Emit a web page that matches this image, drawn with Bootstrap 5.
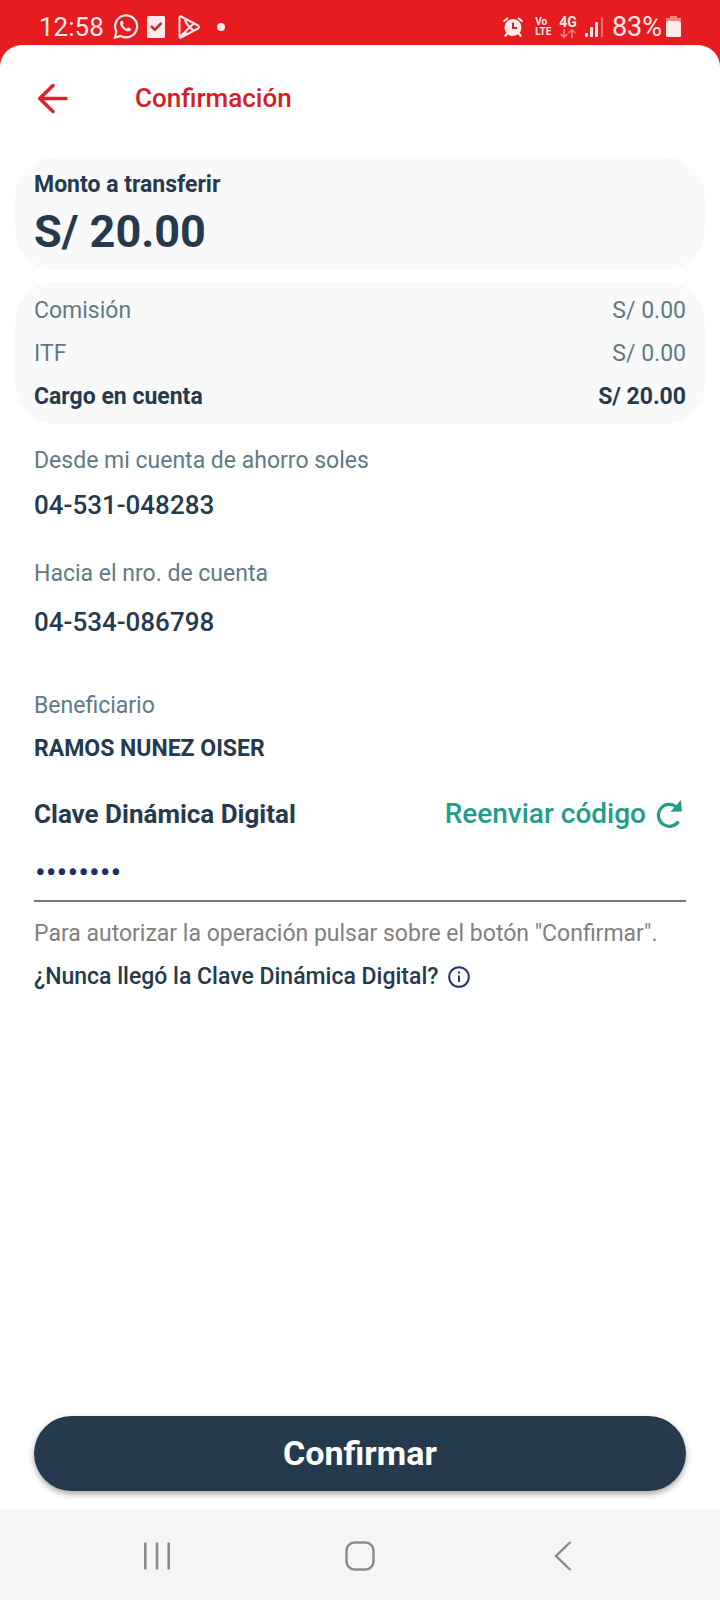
<!DOCTYPE html>
<html lang="es">
<head>
<meta charset="utf-8">
<meta name="viewport" content="width=device-width, initial-scale=1">
<title>Confirmación</title>
<link href="https://cdn.jsdelivr.net/npm/bootstrap@5.3.0/dist/css/bootstrap.min.css" rel="stylesheet">
<style>
  :root { --navy: #263a4e; --slate: #5f7a85; --brand-red: #e61c20; --teal: #1f9e8a; }
  body { font-family: Roboto, "Liberation Sans", sans-serif; font-size: 23px; line-height: 32px; color: var(--navy); background: var(--brand-red); }
  a, button { color: inherit; }
  .fw-mid { font-weight: 500; }
  .status-bar { height: 45px; padding: 8px 39px 0 39px; color: #ffeaea; font-size: 26px; }
  .status-bar .level { font-size: 27px; }
  .status-bar .tiny { font-size: 10px; line-height: 10px; font-weight: 700; }
  .status-bar .tiny span { display: block; }
  .status-bar .net { font-size: 14px; line-height: 14px; font-weight: 700; }
  .sheet { background: #fff; border-radius: 22px 22px 0 0; }
  .top-row { padding: 37px 36px 43px; gap: 65px; color: #d32027; }
  .top-row h1 { font-size: 26px; line-height: 32px; }
  .panel { background: #f9f9f9; border-radius: 40px; margin: 0 15px 12px; padding: 12px 19px 7px; }
  .panel-rows { padding: 7px 19px 6px; margin-bottom: 21px; }
  .panel-rows .charge { line-height: 43px; }
  .amount { font-size: 45px; line-height: 62px; }
  .side { padding-left: 34px; padding-right: 34px; }
  .muted { color: var(--slate); font-weight: 400; }
  .acct { font-size: 26px; line-height: 56px; margin-bottom: 25px; }
  .acct-to { line-height: 64px; margin-bottom: 36px; }
  .payee { line-height: 54px; margin-bottom: 18px; }
  .key-label { font-size: 26px; line-height: 40px; }
  .resend { font-size: 28px; line-height: 40px; color: var(--teal); gap: 9px; padding-right: 3px; }
  .key-input { height: 58px; margin-top: 10px; padding: 0 1px; border: 0; border-bottom: 2px solid #777; border-radius: 0; font-size: 32px; color: #1d2f5f; background: transparent; }
  .hint { color: #808080; margin: 16px 0 11px; }
  .help { gap: 10px; }
  .confirm { height: 75px; font-size: 34px; background: var(--navy); color: #fff; box-shadow: 0 3px 6px rgba(0,0,0,.35); margin-bottom: 19px; }
  .confirm:hover { background: #1f3042; color: #fff; }
  .sys-nav { height: 90px; background: #f5f5f5; padding: 2px 56px 0; }
</style>
</head>
<body class="d-flex flex-column min-vh-100">
<div class="status-bar d-flex align-items-center justify-content-between">
  <div class="d-flex align-items-center gap-2">
    <span>12:58</span>
    <svg width="27" height="27" viewBox="0 0 27 27" fill="none" stroke="currentColor" stroke-width="2.200"><path d="M3 24.500l1.400-6A11 11 0 1 1 8.800 23z"/><path d="M9.500 7.500c-2.500 1.500-1.500 5 1 7.700s6.500 4.500 8.500 1.800c.5-1-.3-1.500-2.800-2.700l-1.500 1.400c-2-.8-3.200-2-4-3.900l1.100-1.300c-.8-2.300-1.200-3.300-2.300-3z" fill="currentColor" stroke="none"/></svg>
    <svg width="18" height="22" viewBox="0 0 18 22"><rect width="18" height="22" rx="1.500" fill="currentColor"/><path d="M4 10l3.800 3.800 6.700-6.800" fill="none" stroke="#c8282c" stroke-width="2.500"/></svg>
    <svg class="ms-1" width="24" height="24" viewBox="0 0 24 24" fill="none" stroke="currentColor" stroke-width="2" stroke-linejoin="round"><path d="M2.500 2.500Q2.500 1 4 1.500L21 10.500Q23 12 21 13.500L4 22.500Q2.500 23 2.500 21.500zM8 4.500Q9 10 16.500 15.500M3 22L16.500 8.500M8 19.500Q8.500 16 10 14.500"/></svg>
    <svg class="ms-2" width="8" height="8"><circle cx="4" cy="4" r="4" fill="currentColor"/></svg>
  </div>
  <div class="d-flex align-items-center gap-2">
    <svg width="20" height="20" viewBox="0 0 20 20" fill="none" stroke="currentColor" stroke-width="2.200" stroke-linecap="round"><circle cx="10" cy="10.500" r="8.500" fill="currentColor" stroke="none"/><path d="M1.200 4L4.200 1.500M18.800 4L15.800 1.500M4.500 16L2.500 18.700M15.500 16l2 2.700"/><path d="M10 5.500V11h4" stroke="#c8282c" stroke-linecap="butt" stroke-width="2"/></svg>
    <span class="tiny ms-1"><span>Vo</span><span>LTE</span></span>
    <span class="net d-flex flex-column align-items-center"><span>4G</span>
      <svg width="16" height="9" viewBox="0 0 16 9" fill="none" stroke="currentColor" stroke-width="1.500" opacity=".5"><path d="M4 0v8M.5 5L4 8.300 7.500 5M12 9V1M8.500 4L12 .8 15.500 4"/></svg></span>
    <svg width="19" height="20" viewBox="0 0 19 20" fill="currentColor"><rect y="16" width="3" height="4" rx="1"/><rect x="5" y="10" width="3" height="10" rx="1"/><rect x="10" y="5" width="3" height="15" rx="1"/><rect x="16" width="2" height="20" rx="1" opacity=".4"/></svg>
    <span class="level d-flex align-items-center gap-1"><span>83%</span>
      <svg width="15" height="21" viewBox="0 0 15 21" fill="currentColor"><path d="M4 0h7v2h4v3H0V2h4z" opacity=".5"/><rect y="5" width="15" height="16" rx="1.500"/></svg></span>
  </div>
</div>

<main class="sheet flex-grow-1 d-flex flex-column">
  <header class="top-row d-flex align-items-center">
    <button type="button" class="btn p-0 border-0 d-flex" aria-label="Volver">
      <svg width="34" height="32" viewBox="0 0 34 32" fill="none" stroke="#e02228" stroke-width="3.500" stroke-linecap="round" stroke-linejoin="round"><path d="M30 16.500H4.500M17 3.500L3.700 16.500 17 29.500"/></svg>
    </button>
    <h1 class="fw-mid m-0">Confirmación</h1>
  </header>

  <section class="panel">
    <div class="fw-bold">Monto a transferir</div>
    <div class="amount fw-bold">S/ 20.00</div>
  </section>
  <section class="panel panel-rows">
    <div class="charge muted d-flex justify-content-between"><span>Comisión</span><span>S/ 0.00</span></div>
    <div class="charge muted d-flex justify-content-between"><span>ITF</span><span>S/ 0.00</span></div>
    <div class="charge fw-bold d-flex justify-content-between"><span>Cargo en cuenta</span><span>S/ 20.00</span></div>
  </section>

  <dl class="side m-0">
    <dt class="muted">Desde mi cuenta de ahorro soles</dt>
    <dd class="acct fw-mid">04-531-048283</dd>
    <dt class="muted">Hacia el nro. de cuenta</dt>
    <dd class="acct acct-to fw-mid">04-534-086798</dd>
    <dt class="muted">Beneficiario</dt>
    <dd class="payee fw-bold">RAMOS NUNEZ OISER</dd>
  </dl>

  <form class="side d-flex flex-column flex-grow-1">
    <div class="d-flex justify-content-between">
      <label class="key-label fw-bold" for="clave">Clave Dinámica Digital</label>
      <button type="button" class="resend btn border-0 py-0 ps-0 fw-mid d-flex align-items-center">Reenviar código
        <svg width="28" height="30" viewBox="0 0 28 30" fill="none" stroke="currentColor" stroke-width="3.200"><path d="M21 7.500A11 11 0 1 0 23.500 22.500"/><path d="M25.800 1L27 12.500 15.500 12.800z" fill="currentColor" stroke="none"/></svg>
      </button>
    </div>
    <input type="password" id="clave" class="key-input w-100" value="12345678" autocomplete="off">
    <p class="hint">Para autorizar la operación pulsar sobre el botón "Confirmar".</p>
    <a href="#" class="help fw-mid text-decoration-none d-flex align-items-center">¿Nunca llegó la Clave Dinámica Digital?
      <svg width="22" height="22" viewBox="0 0 22 22" fill="none" stroke="#263a5e" stroke-width="2"><circle cx="11" cy="11" r="9.800"/><path d="M11 9.500v6.500M11 5.500v2"/></svg>
    </a>
    <button type="submit" class="confirm btn border-0 rounded-pill w-100 fw-bold mt-auto p-0">Confirmar</button>
  </form>
</main>

<nav class="sys-nav d-flex align-items-center" aria-label="Sistema">
  <button type="button" class="btn border-0 p-0 col d-flex justify-content-center" aria-label="Recientes"><svg width="28" height="30" viewBox="0 0 28 30" stroke="#8a8a8a" stroke-width="2.600" stroke-linecap="round"><path d="M2.300 2.500v25M14 2.500v25M25.700 2.500v25"/></svg></button>
  <button type="button" class="btn border-0 p-0 col d-flex justify-content-center" aria-label="Inicio"><svg width="30" height="30" viewBox="0 0 30 30" fill="none" stroke="#8a8a8a" stroke-width="2.400"><rect x="1.500" y="1.500" width="27" height="27" rx="8"/></svg></button>
  <button type="button" class="btn border-0 p-0 col d-flex justify-content-center" aria-label="Atrás"><svg width="18" height="30" viewBox="0 0 18 30" fill="none" stroke="#8a8a8a" stroke-width="2.400"><path d="M16.500 1L2 15l14.500 14"/></svg></button>
</nav>
<script src="https://cdn.jsdelivr.net/npm/bootstrap@5.3.0/dist/js/bootstrap.bundle.min.js"></script>
</body>
</html>
